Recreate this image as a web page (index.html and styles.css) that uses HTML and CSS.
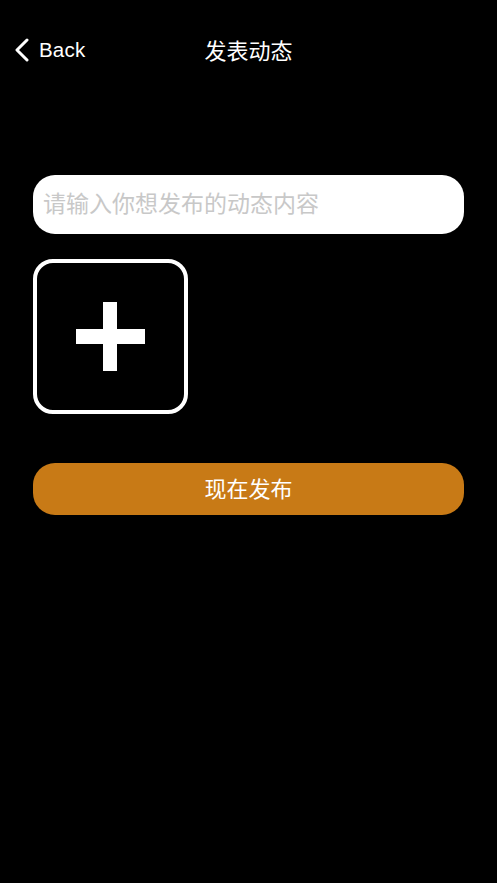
FILE: index.html
```html
<!DOCTYPE html>
<html lang="zh">
<head>
<meta charset="utf-8">
<title>发表动态</title>
<link rel="stylesheet" href="styles.css">
</head>
<body>
<div class="screen">
  <header class="nav">
    <a class="back">
      <svg class="chev" width="16" height="24" viewBox="0 0 16 24"><path d="M13 2 L3 12 L13 22" fill="none" stroke="#fff" stroke-width="3" stroke-linecap="round" stroke-linejoin="round"/></svg>
      <span>Back</span>
    </a>
    <h1 class="title">发表动态</h1>
  </header>
  <main class="content">
    <div class="input"><span class="placeholder">请输入你想发布的动态内容</span></div>
    <div class="add">
      <div class="plus"><span class="h"></span><span class="v"></span></div>
    </div>
    <button class="submit">现在发布</button>
  </main>
</div>
</body>
</html>
```

FILE: styles.css
```css
html, body {
  margin: 0;
  padding: 0;
  background: #000;
}
body {
  font-family: "Noto Sans CJK SC", "Liberation Sans", sans-serif;
  color: #fff;
}
.screen {
  width: 497px;
  height: 883px;
  background: #000;
}
.nav {
  position: relative;
  height: 44px;
  padding-top: 28px;
  display: flex;
  align-items: center;
}
.back {
  display: flex;
  align-items: center;
  margin-left: 14px;
  gap: 9px;
  color: #fff;
}
.chev {
  display: block;
}
.back span {
  font-family: "Liberation Sans", sans-serif;
  font-size: 20.5px;
  line-height: 24px;
  letter-spacing: 0.2px;
}
.title {
  position: absolute;
  left: 0;
  right: 0;
  top: 27px;
  margin: 0;
  height: 44px;
  line-height: 44px;
  text-align: center;
  font-weight: normal;
  font-size: 22px;
  pointer-events: none;
}
.content {
  padding: 103px 33px 0 33px;
  display: flex;
  flex-direction: column;
}
.input {
  height: 59px;
  background: #fff;
  border-radius: 22px;
  display: flex;
  align-items: center;
  padding-left: 10px;
}
.placeholder {
  color: #c8c8c8;
  font-size: 23px;
  line-height: 30px;
  margin-top: -5px;
}
.add {
  margin-top: 25px;
  width: 147px;
  height: 147px;
  border: 4px solid #fff;
  border-radius: 20px;
  display: flex;
  align-items: center;
  justify-content: center;
}
.plus {
  position: relative;
  width: 69px;
  height: 69px;
  margin-left: -1px;
}
.plus .h, .plus .v {
  position: absolute;
  background: #fff;
}
.plus .h {
  left: 0;
  right: 0;
  top: 27px;
  height: 15px;
}
.plus .v {
  top: 0;
  bottom: 0;
  left: 27px;
  width: 14px;
}
.submit {
  margin-top: 49px;
  height: 52px;
  border: none;
  border-radius: 22px;
  background: #c87a16;
  color: #fff;
  font-family: "Noto Sans CJK SC", sans-serif;
  font-size: 22px;
  line-height: 30px;
  padding: 0 0 4px 0;
}
```
